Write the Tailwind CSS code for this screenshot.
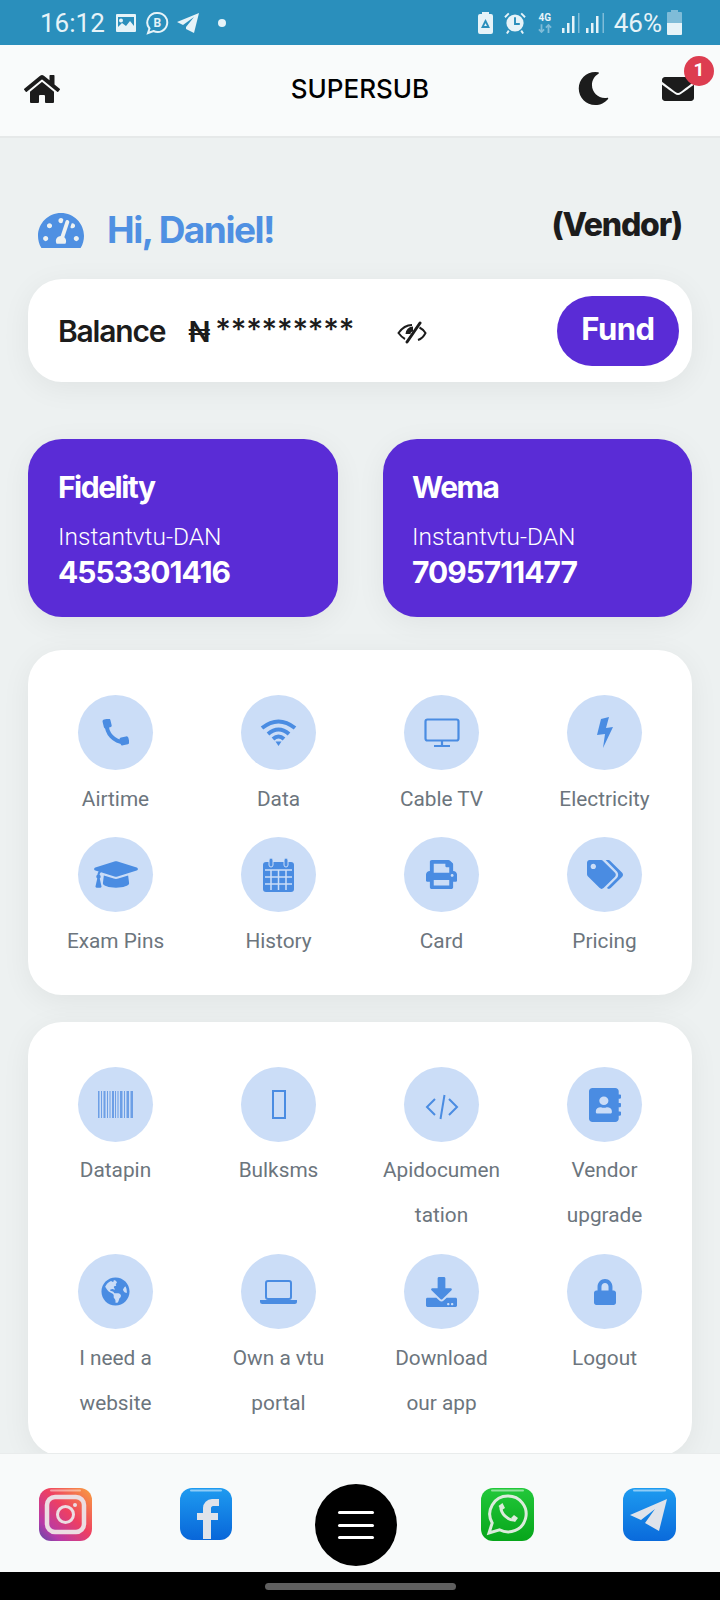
<!DOCTYPE html>
<html lang="en">
<head>
    <meta charset="UTF-8">
    <meta name="viewport" content="width=device-width, initial-scale=1.0">
    <title>SUPERSUB</title>
    <script src="https://cdn.jsdelivr.net/npm/@tailwindcss/browser@4"></script>
</head>
<body class="bg-[#edf1f1] font-[Roboto,sans-serif]">
<div class="w-[720px] h-[1600px] flex flex-col overflow-hidden">

    <!-- status bar -->
    <div class="h-[45px] shrink-0 bg-[#2a8fbc] text-[#e6f3f8] flex items-center pl-[40px] pr-[38px] text-[26px] leading-none">
        <span>16:12</span>
        <svg class="ml-[11px] w-[20px] h-[18px]" viewBox="0 0 20 18"><path fill="#e6f3f8" fill-rule="evenodd" d="M1 0h18a1 1 0 0 1 1 1v16a1 1 0 0 1-1 1H1a1 1 0 0 1-1-1V1a1 1 0 0 1 1-1zm1 3v10l4-4 4 3 4-5 4 5V3zm3 1.5a2 2 0 1 1 0 4 2 2 0 0 1 0-4z"/></svg>
        <svg class="ml-[10px] w-[23px] h-[24px]" viewBox="0 0 23 24"><path fill="none" stroke="#e6f3f8" stroke-width="2" d="M11.5 2a9.500 9.500 0 1 1-4 18L2 22l1.500-4.500A9.500 9.500 0 0 1 11.500 2z"/><text x="7.500" y="16" font-size="12" font-weight="700" fill="#e6f3f8" font-family="Roboto">B</text></svg>
        <svg class="ml-[8px] w-[22px] h-[20px]" viewBox="0 0 22 20"><path fill="#e6f3f8" d="M22 0 0 9l6 3 11-8-8 10v2l8 4z"/></svg>
        <span class="ml-[19px] w-[8px] h-[8px] rounded-full bg-[#e6f3f8]"></span>
        <svg class="ml-auto w-[15px] h-[22px]" viewBox="0 0 15 22"><path fill="#e6f3f8" d="M4 0h7v2h2a2 2 0 0 1 2 2v16a2 2 0 0 1-2 2H2a2 2 0 0 1-2-2V4a2 2 0 0 1 2-2h2z"/><path fill="none" stroke="#2a8fbc" stroke-width="1.8" d="M7.500 9 4.500 15h6zM7.500 9l3 6"/></svg>
        <svg class="ml-[11px] w-[22px] h-[24px]" viewBox="0 0 23 24"><circle cx="11.500" cy="12" r="9" fill="#e6f3f8"/><path fill="none" stroke="#2a8fbc" stroke-width="2" d="M11.500 6v7h5"/><path fill="none" stroke="#e6f3f8" stroke-width="2" d="M1 6l4-4M22 6l-4-4M5 20l-2 3M18 20l2 3"/></svg>
        <span class="ml-[12px] w-[14px] flex flex-col items-center">
            <span class="text-[10px] font-bold leading-[12px]">4G</span>
            <svg class="w-[14px] h-[9px]" viewBox="0 0 16 10"><path fill="none" stroke="#7fbcd8" stroke-width="2" d="M4 0v9M1 6l3 3 3-3M12 10V1M9 4l3-3 3 3"/></svg>
        </span>
        <svg class="ml-[10px] w-[42px] h-[20px]" viewBox="0 0 42 20"><path fill="#e6f3f8" d="M0 15h2.500v5H0zM5 10h2.500v10H5zM10 3h2.500v17H10z"/><path fill="#7fbcd8" d="M16 0h1.500v20H16z"/><path fill="#e6f3f8" d="M24 15h2.500v5H24zM29 10h2.500v10H29zM34 3h2.500v17H34z"/><path fill="#7fbcd8" d="M40.500 0H42v20h-1.500z"/></svg>
        <span class="ml-[10px]">46%</span>
        <svg class="ml-[5px] w-[15px] h-[25px]" viewBox="0 0 15 25"><path fill="#7fbcd8" d="M4 0h7v2h3a1 1 0 0 1 1 1v10H0V3a1 1 0 0 1 1-1h3z"/><path fill="#e6f3f8" d="M0 13h15v11a1 1 0 0 1-1 1H1a1 1 0 0 1-1-1z"/></svg>
    </div>

    <!-- top bar -->
    <header class="h-[93px] shrink-0 bg-[#f9fbfb] border-b-2 border-[#e6e9e9] flex items-center pl-[24px] pb-[4px]">
        <svg class="w-[36px] h-[32px] fill-[#1c1c1c]" viewBox="0 0 576 512"><path d="M280.37 148.26L96 300.11V464a16 16 0 0 0 16 16l112.06-.29a16 16 0 0 0 15.92-16V368a16 16 0 0 1 16-16h64a16 16 0 0 1 16 16v95.64a16 16 0 0 0 16 16.05L464 480a16 16 0 0 0 16-16V300L295.67 148.26a12.19 12.19 0 0 0-15.3 0zM571.6 251.47L488 182.56V44.05a12 12 0 0 0-12-12h-56a12 12 0 0 0-12 12v72.61L318.47 43a48 48 0 0 0-61 0L4.34 251.47a12 12 0 0 0-1.6 16.9l25.5 31A12 12 0 0 0 45.15 301l235.22-193.74a12.19 12.19 0 0 1 15.3 0L530.9 301a12 12 0 0 0 16.9-1.6l25.5-31a12 12 0 0 0-1.7-16.93z"/></svg>
        <span class="ml-[230px] w-[140px] text-center text-[26px] font-medium text-black font-[Inter,sans-serif]">SUPERSUB</span>
        <svg class="ml-[147px] w-[33px] h-[33px] fill-[#1c1c1c]" viewBox="0 0 512 512"><path d="M283.211 512c78.962 0 151.079-35.925 198.857-94.792 7.068-8.708-.639-21.43-11.562-19.35-124.203 23.654-238.262-71.576-238.262-196.954 0-72.222 38.662-138.635 101.498-174.394 9.686-5.512 7.25-20.197-3.756-22.23A258.156 258.156 0 0 0 283.211 0c-141.309 0-256 114.511-256 256 0 141.309 114.511 256 256 256z"/></svg>
        <div class="relative ml-[52px]">
            <svg class="w-[32px] h-[32px] fill-[#1c1c1c]" viewBox="0 0 512 512"><path d="M502.3 190.8c3.9-3.1 9.7-.2 9.7 4.7V400c0 26.5-21.5 48-48 48H48c-26.5 0-48-21.5-48-48V195.6c0-5 5.7-7.8 9.7-4.7 22.4 17.4 52.1 39.5 154.1 113.6 21.1 15.4 56.7 47.8 92.2 47.6 35.7.3 72-32.8 92.3-47.6 102-74.1 131.6-96.3 154-113.7zM256 320c23.2.4 56.6-29.2 73.4-41.4 132.7-96.3 142.8-104.7 173.4-128.7 5.8-4.5 9.2-11.5 9.2-18.9v-19c0-26.5-21.5-48-48-48H48C21.5 64 0 85.5 0 112v19c0 7.4 3.4 14.3 9.2 18.9 30.6 23.9 40.7 32.4 173.4 128.7 16.8 12.2 50.2 41.8 73.4 41.4z"/></svg>
            <span class="absolute left-[22px] -top-[17px] w-[30px] h-[30px] rounded-full bg-[#dd3d50] text-white text-[19px] font-bold flex items-center justify-center">1</span>
        </div>
    </header>

    <!-- page content -->
    <main class="flex-1 min-h-0 overflow-hidden px-[28px]">
        <div class="h-[141px] flex items-start justify-between">
            <div class="flex items-center mt-[72px]">
                <svg class="ml-[10px] w-[46px] h-[35px] fill-[#4f90e2]" viewBox="0 32 576 438" preserveAspectRatio="none"><path d="M288 32C128.94 32 0 160.94 0 320c0 52.8 14.25 102.26 39.06 144.8 5.61 9.62 16.3 15.2 27.44 15.2h443c11.14 0 21.83-5.58 27.44-15.2C561.75 422.26 576 372.8 576 320c0-159.06-128.94-288-288-288zm0 64c14.71 0 26.58 10.13 30.32 23.65-1.11 2.26-2.64 4.23-3.45 6.67l-9.22 27.67c-5.13 3.49-10.97 6.01-17.64 6.01-17.67 0-32-14.33-32-32S270.33 96 288 96zM96 384c-17.67 0-32-14.33-32-32s14.33-32 32-32 32 14.33 32 32-14.33 32-32 32zm48-160c-17.67 0-32-14.33-32-32s14.33-32 32-32 32 14.33 32 32-14.33 32-32 32zm246.77-72.41l-61.33 184C343.13 347.33 352 364.54 352 384c0 11.72-3.38 22.55-8.88 32H232.88c-5.5-9.45-8.88-20.28-8.88-32 0-33.94 26.5-61.43 59.9-63.59l61.34-184.01c4.17-12.56 17.73-19.45 30.36-15.17 12.57 4.19 19.35 17.79 15.17 30.36zm14.66 57.2l15.52-46.55c3.47-1.29 7.13-2.23 11.05-2.23 17.67 0 32 14.33 32 32s-14.33 32-32 32c-11.38-.01-20.89-6.28-26.57-15.22zM480 384c-17.67 0-32-14.33-32-32s14.33-32 32-32 32 14.33 32 32-14.33 32-32 32z"/></svg>
                <span class="ml-[23px] text-[37px] font-bold tracking-[-1.5px] leading-[40px] text-[#4f90e2] font-[Inter,sans-serif]">Hi, Daniel!</span>
            </div>
            <span class="mt-[67px] mr-[10px] text-[32px] font-extrabold tracking-[-1.2px] leading-[40px] text-[#1c1c1c] font-[Inter,sans-serif]">(Vendor)</span>
        </div>

        <!-- balance -->
        <section class="h-[103px] bg-white rounded-[34px] shadow-[0_6px_30px_rgba(0,0,0,0.06)] flex items-center pl-[30px] pr-[13px] font-[Inter,sans-serif]">
            <span class="mt-[2px] text-[30px] font-semibold tracking-[-1.2px] text-[#1c1c1c]">Balance</span>
            <span class="ml-[23px] mt-[2px] text-[29px] font-semibold text-[#1c1c1c]">₦</span>
            <span class="ml-[5px] -mt-[3px] text-[30px] font-medium text-[#1c1c1c] tracking-[-0.2px]">*********</span>
            <svg class="ml-[43px] mt-[3px] w-[30px] h-[23px]" viewBox="0 0 30 23" fill="none" stroke="#1c1c1c"><path stroke-width="2" d="M8 18C5 16.500 3 14 1.500 12 5 7 10 4 15 4M21 19c3-1 6-4 7.500-7C26.500 9 24.500 7.500 22.500 6.500"/><path stroke-width="3" stroke-linecap="round" d="M23 2 10 21"/><path stroke-width="5" d="M16 8a5 5 0 0 0-5 5"/></svg>
            <button class="ml-auto w-[122px] h-[70px] rounded-[35px] bg-[#5a2cd6] text-white text-[31px] font-bold tracking-[-0.5px] pb-[3px]">Fund</button>
        </section>

        <!-- virtual accounts -->
        <div class="mt-[57px] h-[178px] flex gap-[45px] text-white">
            <div class="w-[310px] bg-[#5a2cd6] rounded-[34px] shadow-[0_6px_30px_rgba(0,0,0,0.06)] pl-[30px] pt-[28px]">
                <p class="font-[Inter,sans-serif] text-[30px] font-bold tracking-[-1.5px] leading-[40px]">Fidelity</p>
                <p class="mt-[15px] text-[24.5px] font-light leading-[30px]">Instantvtu-DAN</p>
                <p class="font-[Inter,sans-serif] text-[30px] font-bold leading-[40px] tracking-[-1px]">4553301416</p>
            </div>
            <div class="w-[309px] bg-[#5a2cd6] rounded-[34px] shadow-[0_6px_30px_rgba(0,0,0,0.06)] pl-[29px] pt-[28px]">
                <p class="font-[Inter,sans-serif] text-[30px] font-bold tracking-[-1.5px] leading-[40px]">Wema</p>
                <p class="mt-[15px] text-[24.5px] font-light leading-[30px]">Instantvtu-DAN</p>
                <p class="font-[Inter,sans-serif] text-[30px] font-bold leading-[40px] tracking-[-1px]">7095711477</p>
            </div>
        </div>

        <!-- services -->
        <section class="mt-[33px] h-[345px] bg-white rounded-[34px] shadow-[0_6px_30px_rgba(0,0,0,0.06)] px-[6px] pt-[45px] grid grid-cols-4 gap-y-[15px] content-start text-center text-[20.8px] leading-[45px] text-[#6c757d]">
            <a class="flex flex-col items-center px-[21px]">
                <span class="w-[75px] h-[75px] rounded-full bg-[#cbddf7] flex items-center justify-center"><svg class="w-[27px] h-[27px]" viewBox="0 0 27 27"><path fill="none" stroke="#4a8ce2" stroke-width="4" d="M5 5C4 14 12 23 22 23"/><rect x="1" y="0" width="8" height="9" rx="2" transform="rotate(-14 5 4)" fill="#4a8ce2"/><rect x="18" y="18" width="9" height="8" rx="2" transform="rotate(-14 22 22)" fill="#4a8ce2"/></svg></span>
                <span class="mt-[7px]">Airtime</span>
            </a>
            <a class="flex flex-col items-center px-[21px]">
                <span class="w-[75px] h-[75px] rounded-full bg-[#cbddf7] flex items-center justify-center"><svg class="w-[37px] h-[27px]" viewBox="0 0 37 27" fill="none" stroke="#4a8ce2" stroke-width="4"><path d="M2 9Q18.500-4 35 9M8 15Q18.500 6 29 15M13 20Q18.500 15 24 20"/><path fill="#4a8ce2" stroke="none" d="M15.500 22.500h6L18.500 27z"/></svg></span>
                <span class="mt-[7px]">Data</span>
            </a>
            <a class="flex flex-col items-center px-[21px]">
                <span class="w-[75px] h-[75px] rounded-full bg-[#cbddf7] flex items-center justify-center"><svg class="w-[36px] h-[29px]" viewBox="0 0 36 29" fill="none" stroke="#4a8ce2"><rect x="1.500" y="1.500" width="33" height="21" rx="2" stroke-width="2.200"/><path stroke-width="2.200" d="M18 22v5M10 28h16"/></svg></span>
                <span class="mt-[7px]">Cable TV</span>
            </a>
            <a class="flex flex-col items-center px-[21px]">
                <span class="w-[75px] h-[75px] rounded-full bg-[#cbddf7] flex items-center justify-center"><svg class="w-[17px] h-[31px] fill-[#4a8ce2]" viewBox="0 0 17 31"><path d="M5 2l8-2-3 11 7-1L7 31l2-14-8 1z"/></svg></span>
                <span class="mt-[7px] -mx-[10px] whitespace-nowrap">Electricity</span>
            </a>
            <a class="flex flex-col items-center px-[21px]">
                <span class="w-[75px] h-[75px] rounded-full bg-[#cbddf7] flex items-center justify-center"><svg class="w-[44px] h-[35px] fill-[#4a8ce2]" viewBox="0 0 640 512"><path d="M622.34 153.2L343.4 67.5c-15.2-4.67-31.6-4.67-46.79 0L17.66 153.2c-23.54 7.23-23.54 38.36 0 45.59l48.63 14.94c-10.67 13.19-17.23 29.28-17.88 46.9C38.78 266.15 32 276.11 32 288c0 10.78 5.68 19.85 13.86 25.65L20.33 428.53C18.11 438.52 25.71 448 35.94 448h56.11c10.24 0 17.84-9.48 15.62-19.47L82.14 313.65C90.32 307.85 96 298.78 96 288c0-11.57-6.47-21.25-15.66-26.87.76-15.02 8.44-28.3 20.69-36.72L296.6 284.5c9.06 2.78 26.44 6.25 46.79 0l278.95-85.7c23.55-7.24 23.55-38.36 0-45.6zM352.79 315.09c-28.53 8.76-52.84 3.92-65.59 0l-145.02-44.55L128 384c0 35.35 85.96 64 192 64s192-28.65 192-64l-14.18-113.47-145.03 44.56z"/></svg></span>
                <span class="mt-[7px] -mx-[10px] whitespace-nowrap">Exam Pins</span>
            </a>
            <a class="flex flex-col items-center px-[21px]">
                <span class="w-[75px] h-[75px] rounded-full bg-[#cbddf7] flex items-center justify-center"><svg class="w-[31px] h-[34px]" viewBox="0 0 31 34"><rect y="4" width="31" height="30" rx="3" fill="#4a8ce2"/><path fill="none" stroke="#cbddf7" stroke-width="1.5" d="M2 12h27M2 19h27M2 26h27M8 12v20M15.5 12v20M23 12v20"/><rect x="6" y="0" width="4" height="9" rx="2" fill="#4a8ce2" stroke="#cbddf7"/><rect x="21" y="0" width="4" height="9" rx="2" fill="#4a8ce2" stroke="#cbddf7"/></svg></span>
                <span class="mt-[7px]">History</span>
            </a>
            <a class="flex flex-col items-center px-[21px]">
                <span class="w-[75px] h-[75px] rounded-full bg-[#cbddf7] flex items-center justify-center"><svg class="w-[31px] h-[29px] fill-[#4a8ce2]" viewBox="0 0 512 512" preserveAspectRatio="none"><path d="M448 192V77.25c0-8.49-3.37-16.62-9.37-22.63L393.37 9.37c-6-6-14.14-9.37-22.63-9.37H96C78.33 0 64 14.33 64 32v160c-35.35 0-64 28.65-64 64v112c0 8.84 7.16 16 16 16h48v96c0 17.67 14.33 32 32 32h320c17.67 0 32-14.33 32-32v-96h48c8.84 0 16-7.16 16-16V256c0-35.35-28.65-64-64-64zm-64 256H128v-96h256v96zm0-224H128V64h192v48c0 8.84 7.16 16 16 16h48v96zm48 72c-13.25 0-24-10.75-24-24 0-13.26 10.75-24 24-24s24 10.74 24 24c0 13.25-10.75 24-24 24z"/></svg></span>
                <span class="mt-[7px]">Card</span>
            </a>
            <a class="flex flex-col items-center px-[21px]">
                <span class="w-[75px] h-[75px] rounded-full bg-[#cbddf7] flex items-center justify-center"><svg class="w-[36px] h-[29px] fill-[#4a8ce2]" viewBox="0 0 640 512"><path d="M497.941 225.941L286.059 14.059A48 48 0 0 0 252.118 0H48C21.49 0 0 21.49 0 48v204.118a48 48 0 0 0 14.059 33.941l211.882 211.882c18.744 18.745 49.136 18.746 67.882 0l204.118-204.118c18.745-18.745 18.745-49.137 0-67.882zM112 160c-26.51 0-48-21.49-48-48s21.49-48 48-48 48 21.49 48 48-21.49 48-48 48zm513.941 133.823L421.823 497.941c-18.745 18.745-49.137 18.745-67.882 0l-.36-.36L527.64 323.522c16.999-16.999 26.36-39.6 26.36-63.64s-9.362-46.641-26.36-63.64L331.397 0h48.721a48 48 0 0 1 33.941 14.059l211.882 211.882c18.745 18.745 18.745 49.137 0 67.882z"/></svg></span>
                <span class="mt-[7px]">Pricing</span>
            </a>
        </section>

        <section class="mt-[27px] h-[434px] bg-white rounded-[34px] shadow-[0_6px_30px_rgba(0,0,0,0.06)] px-[6px] pt-[45px] grid grid-cols-4 gap-y-[16px] content-start text-center text-[20.8px] leading-[45px] text-[#6c757d]">
            <a class="flex flex-col items-center px-[21px]">
                <span class="w-[75px] h-[75px] rounded-full bg-[#cbddf7] flex items-center justify-center"><svg class="w-[35px] h-[27px] fill-[#6d9fe6]" viewBox="0 0 35 27"><path d="M0 0h1.5v27H0zM3 0h1v27H3zM5.5 0h2v27h-2zM9 0h1v27H9zM11.5 0h1v27h-1zM14 0h2v27h-2zM17 0h1v27h-1zM19.5 0h1v27h-1zM22 0h2.5v27H22zM26 0h1v27h-1zM28.5 0H31v27h-2.500zM32.500 0H35v27h-2.500z"/></svg></span>
                <span class="mt-[6px]">Datapin</span>
            </a>
            <a class="flex flex-col items-center px-[21px]">
                <span class="w-[75px] h-[75px] rounded-full bg-[#cbddf7] flex items-center justify-center"><span class="w-[14px] h-[29px] border-2 border-[#4a8ce2]"></span></span>
                <span class="mt-[6px]">Bulksms</span>
            </a>
            <a class="flex flex-col items-center px-[21px]">
                <span class="w-[75px] h-[75px] rounded-full bg-[#cbddf7] flex items-center justify-center"><svg class="w-[34px] h-[26px] mt-[4px]" viewBox="0 0 34 26" fill="none" stroke="#4a8ce2" stroke-width="2"><path d="M10 5 2 13l8 8M24 5l8 8-8 8M19.5 1l-4 24"/></svg></span>
                <span class="mt-[6px] break-all">Apidocumentation</span>
            </a>
            <a class="flex flex-col items-center px-[21px]">
                <span class="w-[75px] h-[75px] rounded-full bg-[#cbddf7] flex items-center justify-center"><svg class="w-[32px] h-[34px] fill-[#4a8ce2]" viewBox="0 0 448 512" preserveAspectRatio="none"><path d="M436 160c6.6 0 12-5.4 12-12v-40c0-6.6-5.4-12-12-12h-20V48c0-26.5-21.5-48-48-48H48C21.5 0 0 21.5 0 48v416c0 26.5 21.5 48 48 48h320c26.5 0 48-21.5 48-48v-48h20c6.6 0 12-5.4 12-12v-40c0-6.6-5.4-12-12-12h-20v-64h20c6.6 0 12-5.4 12-12v-40c0-6.6-5.4-12-12-12h-20v-64h20zm-228-32c35.3 0 64 28.7 64 64s-28.7 64-64 64-64-28.7-64-64 28.7-64 64-64zm112 236.8c0 10.6-10 19.2-22.4 19.2H118.4C106 384 96 375.4 96 364.8v-19.2c0-31.8 30.1-57.6 67.2-57.6h5c12.3 5.1 25.7 8 39.8 8s27.6-2.9 39.8-8h5c37.1 0 67.2 25.8 67.2 57.6v19.2z"/></svg></span>
                <span class="mt-[6px]">Vendor upgrade</span>
            </a>
            <a class="flex flex-col items-center px-[21px]">
                <span class="w-[75px] h-[75px] rounded-full bg-[#cbddf7] flex items-center justify-center"><svg class="w-[29px] h-[29px] fill-[#4a8ce2]" viewBox="0 0 496 512"><path d="M248 8C111.03 8 0 119.03 0 256s111.03 248 248 248 248-111.03 248-248S384.97 8 248 8zm82.29 357.6c-3.9 3.88-7.99 7.95-11.31 11.28-2.99 3-5.1 6.7-6.17 10.71-1.51 5.66-2.73 11.38-4.77 16.87l-17.39 46.85c-13.76 3-28 4.69-42.65 4.69v-27.38c1.69-12.62-7.64-36.26-22.63-51.25-6-6-9.37-14.14-9.37-22.63v-32.01c0-11.64-6.27-22.34-16.46-27.97-14.37-7.95-34.81-19.06-48.81-26.11-11.48-5.78-22.1-13.14-31.65-21.75l-.8-.72a114.792 114.792 0 0 1-18.06-20.74c-9.38-13.77-24.66-36.42-34.59-51.14 20.47-45.5 57.36-82.04 103.2-101.89l24.01 12.01C203.48 89.74 216 82.01 216 70.11v-11.3c7.99-1.29 16.12-2.11 24.39-2.42l28.3 28.3c6.25 6.25 6.25 16.38 0 22.63L264 112l-10.34 10.34c-3.12 3.12-3.12 8.19 0 11.31l4.69 4.69c3.12 3.12 3.12 8.19 0 11.31l-8 8a8.008 8.008 0 0 1-5.66 2.34h-8.99c-2.08 0-4.08.81-5.58 2.27l-9.92 9.65a8.008 8.008 0 0 0-1.58 9.31l15.59 31.19c2.66 5.32-1.21 11.58-7.15 11.58h-5.64c-1.93 0-3.79-.7-5.24-1.96l-9.28-8.06a16.017 16.017 0 0 0-15.55-3.1l-31.17 10.39a11.95 11.95 0 0 0-8.17 11.34c0 4.53 2.56 8.66 6.61 10.69l11.08 5.54c9.41 4.71 19.79 7.16 30.31 7.16s22.59 27.29 32 32h66.75c8.49 0 16.62 3.37 22.63 9.37l13.69 13.69a30.503 30.503 0 0 1 8.93 21.57 46.536 46.536 0 0 1-13.72 32.98zM417 274.25c-5.79-1.45-10.84-5-14.15-9.97l-17.98-26.97a23.97 23.97 0 0 1 0-26.62l19.59-29.38c2.32-3.47 5.5-6.29 9.24-8.15l12.98-6.49C440.2 193.59 448 223.87 448 256c0 8.67-.74 17.16-1.82 25.54L417 274.25z"/></svg></span>
                <span class="mt-[7px]">I need a website</span>
            </a>
            <a class="flex flex-col items-center px-[21px]">
                <span class="w-[75px] h-[75px] rounded-full bg-[#cbddf7] flex items-center justify-center"><svg class="w-[37px] h-[24px]" viewBox="0 0 37 24"><rect x="6" y="1" width="25" height="18" rx="2" fill="none" stroke="#4a8ce2" stroke-width="2"/><path fill="#4a8ce2" d="M0 20h37v1.5a2.500 2.500 0 0 1-2.500 2.500h-32A2.500 2.500 0 0 1 0 21.500z"/></svg></span>
                <span class="mt-[7px]">Own a vtu portal</span>
            </a>
            <a class="flex flex-col items-center px-[21px]">
                <span class="w-[75px] h-[75px] rounded-full bg-[#cbddf7] flex items-center justify-center"><svg class="w-[31px] h-[30px] fill-[#4a8ce2]" viewBox="0 0 512 512" preserveAspectRatio="none"><path d="M216 0h80c13.3 0 24 10.7 24 24v168h87.7c17.8 0 26.7 21.5 14.1 34.1L269.7 378.3c-7.5 7.5-19.8 7.5-27.3 0L90.1 226.1c-12.6-12.6-3.7-34.1 14.1-34.1H192V24c0-13.3 10.7-24 24-24zm296 376v112c0 13.3-10.7 24-24 24H24c-13.3 0-24-10.7-24-24V376c0-13.3 10.7-24 24-24h146.7l49 49c20.1 20.1 52.5 20.1 72.6 0l49-49H488c13.3 0 24 10.7 24 24zm-124 88c0-11-9-20-20-20s-20 9-20 20 9 20 20 20 20-9 20-20zm64 0c0-11-9-20-20-20s-20 9-20 20 9 20 20 20 20-9 20-20z"/></svg></span>
                <span class="mt-[7px]">Download our app</span>
            </a>
            <a class="flex flex-col items-center px-[21px]">
                <span class="w-[75px] h-[75px] rounded-full bg-[#cbddf7] flex items-center justify-center"><svg class="w-[22px] h-[26px] fill-[#4a8ce2]" viewBox="0 0 448 512" preserveAspectRatio="none"><path d="M400 224h-24v-72C376 68.2 307.8 0 224 0S72 68.2 72 152v72H48c-26.5 0-48 21.5-48 48v192c0 26.5 21.5 48 48 48h352c26.5 0 48-21.5 48-48V272c0-26.5-21.5-48-48-48zm-104 0H152v-72c0-39.7 32.3-72 72-72s72 32.3 72 72v72z"/></svg></span>
                <span class="mt-[7px]">Logout</span>
            </a>
        </section>
    </main>

    <!-- bottom bar -->
    <footer class="h-[119px] shrink-0 bg-[#f8fafa] border-t border-[#e9ecec] flex items-start pl-[39px] pt-[34px]">
        <svg class="w-[53px] h-[53px] blur-[0.5px]" viewBox="0 0 53 53">
            <defs>
                <linearGradient id="igBg" x1="1" y1="0" x2="0" y2="1"><stop offset="0" stop-color="#f9a23f"/><stop offset="0.45" stop-color="#ee3f62"/><stop offset="0.8" stop-color="#b63aa8"/><stop offset="1" stop-color="#5a4aa8"/></linearGradient>
            </defs>
            <rect width="53" height="53" rx="12" fill="url(#igBg)"/>
            <path d="M12 2.500h29" stroke="#fff" stroke-opacity="0.45" stroke-width="2" stroke-linecap="round"/>
            <rect x="8" y="9" width="37" height="35" rx="8" fill="none" stroke="#ecdde2" stroke-width="4.500"/>
            <circle cx="26.500" cy="26.500" r="8" fill="none" stroke="#ecdde2" stroke-width="3"/>
            <circle cx="36" cy="17" r="2" fill="#ecdde2"/>
        </svg>
        <svg class="ml-[88px] w-[52px] h-[52px] blur-[0.5px]" viewBox="0 0 52 52">
            <defs>
                <linearGradient id="fbBg" x1="0" y1="0" x2="0" y2="1"><stop offset="0" stop-color="#1e9bf0"/><stop offset="1" stop-color="#0866d9"/></linearGradient>
            </defs>
            <rect width="52" height="52" rx="12" fill="url(#fbBg)"/>
            <path d="M11 2.500h30" stroke="#fff" stroke-opacity="0.5" stroke-width="2" stroke-linecap="round"/>
            <path d="M39 11h-7a9 9 0 0 0-9 9v5h-6v7h6v19h8V32h7v-7h-7v-5c0-1 1-2 2-2h6z" fill="#dfe3ea"/>
        </svg>
        <button class="ml-[83px] mt-[-4px] w-[82px] h-[82px] rounded-full bg-black flex flex-col items-center justify-center gap-[9.5px]">
            <span class="w-[36px] h-[3px] bg-white rounded-sm"></span>
            <span class="w-[36px] h-[3px] bg-white rounded-sm"></span>
            <span class="w-[36px] h-[3px] bg-white rounded-sm"></span>
        </button>
        <svg class="ml-[84px] w-[53px] h-[53px] blur-[0.5px]" viewBox="0 0 53 53">
            <defs>
                <linearGradient id="waBg" x1="0" y1="0" x2="0" y2="1"><stop offset="0" stop-color="#22c83a"/><stop offset="1" stop-color="#07a51a"/></linearGradient>
            </defs>
            <rect width="53" height="53" rx="12" fill="url(#waBg)"/>
            <path d="M11 2.500h31" stroke="#fff" stroke-opacity="0.5" stroke-width="2" stroke-linecap="round"/>
            <path d="M27 8a18 18 0 1 1-8.500 33.800L8 45l3.200-10A18 18 0 0 1 27 8z" fill="none" stroke="#dcebdc" stroke-width="3"/>
            <path fill="none" stroke="#dcebdc" stroke-width="3" d="M20 18c-1 7 7 15 14 14"/>
            <path fill="#dcebdc" d="M17.500 18l4-3 2.500 5-3 2zM30 30l3-3 4 3-3 4z"/>
        </svg>
        <svg class="ml-[89px] w-[53px] h-[53px] blur-[0.5px]" viewBox="0 0 53 53">
            <defs>
                <linearGradient id="tgBg" x1="0" y1="0" x2="0" y2="1"><stop offset="0" stop-color="#1d9bf0"/><stop offset="1" stop-color="#0a6adb"/></linearGradient>
            </defs>
            <rect width="53" height="53" rx="12" fill="url(#tgBg)"/>
            <path d="M11 2.500h31" stroke="#fff" stroke-opacity="0.5" stroke-width="2" stroke-linecap="round"/>
            <path d="M44 11 7 27l11 5 14-11-10 14 14 8z" fill="#dfe3ea"/>
        </svg>
    </footer>

    <!-- android nav -->
    <div class="h-[28px] shrink-0 bg-black flex items-center justify-center pt-[1px]">
        <span class="w-[191px] h-[7px] rounded-full bg-[#5f5f5f]"></span>
    </div>
</div>
</body>
</html>
